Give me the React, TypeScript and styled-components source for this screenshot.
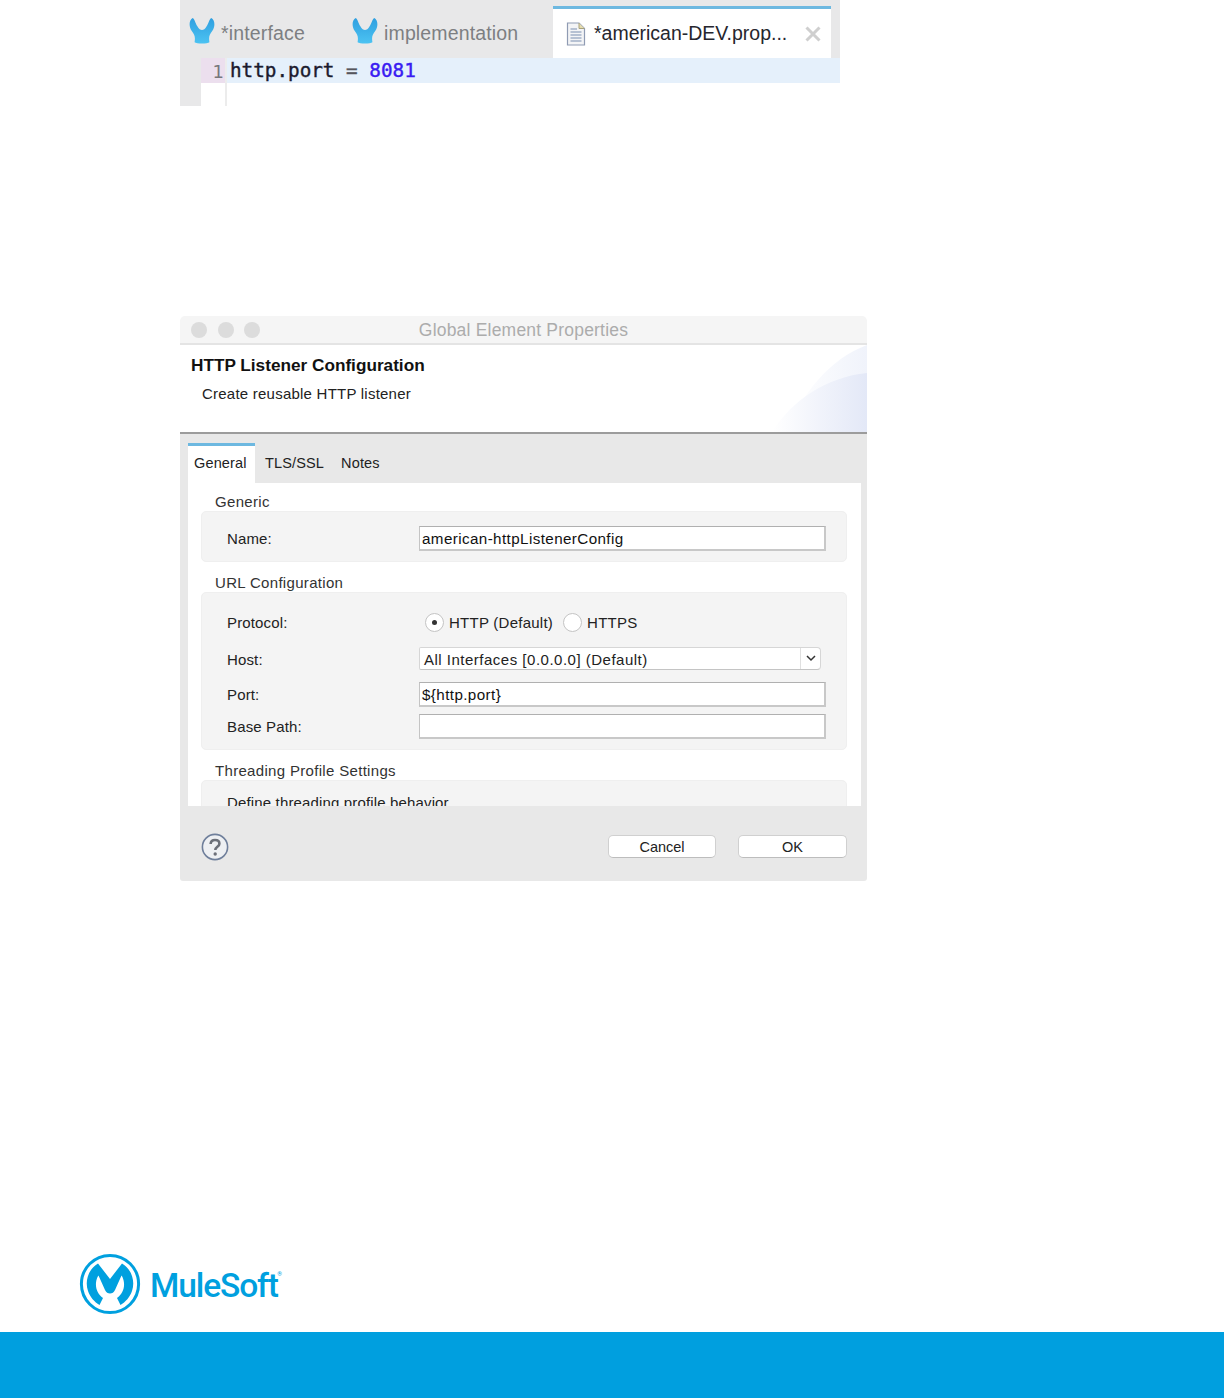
import styled, { createGlobalStyle } from 'styled-components'

const GlobalStyle = createGlobalStyle`
  html, body {
    margin: 0;
    padding: 0;
    background: #fff;
    font-family: "Liberation Sans", Arial, sans-serif;
  }
`

function MuleIcon() {
  return (
    <TabIconSvg width="26" height="28" viewBox="0 0 28 30">
      <defs>
        <linearGradient id="muleGrad" x1="0" y1="0" x2="0" y2="1">
          <stop offset="0" stopColor="#2f9fe0" />
          <stop offset="1" stopColor="#4cc3f2" />
        </linearGradient>
      </defs>
      <path
        d="M4 1C0 3 -0.5 10 3 15C6 19 7 21 6 27C8 29 20 29 22 27C21 21 22 19 25 15C28.500 10 28 3 24 1C22 2 21 7 19 10C17.500 13 15.500 14 14 14C12.500 14 10.500 13 9 10C7 7 6 2 4 1Z"
        fill="url(#muleGrad)"
      />
    </TabIconSvg>
  )
}

function FileIcon() {
  return (
    <svg width="20" height="24" viewBox="0 0 20 24">
      <path d="M1.5 1H13L18.5 6.5V23H1.5Z" fill="#f3f4f6" stroke="#8f9bb3" strokeWidth="1.2" />
      <path d="M13 1V6.5H18.5" fill="#e6dcae" stroke="#a8a27c" strokeWidth="1" />
      <path d="M4.5 7H11M4.5 10H15.5M4.5 13H15.5M4.5 16H15.5M4.5 19H15.5" stroke="#7b8db0" strokeWidth="1.2" />
    </svg>
  )
}

function CloseIcon() {
  return (
    <CloseSvg width="16" height="16" viewBox="0 0 16 16">
      <path d="M1.500 1.500L14.500 14.500M14.500 1.500L1.500 14.500" stroke="#cfcfcf" strokeWidth="3" />
    </CloseSvg>
  )
}

function HeaderSwoosh() {
  return (
    <SwooshSvg width="100" height="87" viewBox="0 0 100 87">
      <defs>
        <linearGradient id="swooshGrad" x1="0" y1="0" x2="1" y2="0">
          <stop offset="0" stopColor="#ffffff" />
          <stop offset="1" stopColor="#e3e8f7" />
        </linearGradient>
        <linearGradient id="swooshLight" x1="0" y1="0" x2="1" y2="0">
          <stop offset="0" stopColor="#ffffff" />
          <stop offset="1" stopColor="#f0f3fb" />
        </linearGradient>
      </defs>
      <path d="M20 87C34 50 62 14 100 0V87Z" fill="url(#swooshLight)" />
      <path d="M5 87C25 55 60 32 100 28V87Z" fill="url(#swooshGrad)" />
    </SwooshSvg>
  )
}

function HelpIcon() {
  return (
    <svg width="28" height="28" viewBox="0 0 28 28">
      <circle cx="14" cy="14" r="12.600" fill="#eef0f3" stroke="#6f7f9b" strokeWidth="1.600" />
      <path
        d="M9.600 11C9.800 8.200 11.600 7 14 7C16.600 7 18.400 8.500 18.400 10.700C18.400 13.800 14.300 13.800 14.300 17"
        fill="none"
        stroke="#6c7079"
        strokeWidth="2.600"
      />
      <circle cx="14.200" cy="21" r="1.700" fill="#6c7079" />
    </svg>
  )
}

function MuleLogo() {
  return (
    <svg width="62" height="62" viewBox="0 0 62 62">
      <circle cx="31" cy="31" r="28.600" fill="none" stroke="#00a0df" strokeWidth="3" />
      <path
        d="M19 10.500C9.500 16 5.500 28 9 38C11 44 15.500 49 20.500 52L24 45C19 41.500 16.500 36 17 30C17.300 27 18 24.500 19.500 22.500L26 37C27 39.500 29 40.500 31 40.500C33 40.500 35 39.500 36 37L42.500 22.500C44 24.500 44.700 27 45 30C45.500 36 43 41.500 38 45L41.500 52C46.500 49 51 44 53 38C56.500 28 52.500 16 43 10.500L31 26Z"
        fill="#00a0df"
      />
    </svg>
  )
}

export default function App() {
  return (
    <>
      <GlobalStyle />
      <Page>
        <Editor>
          <TabBar>
            <EditorTab $width={163}>
              <MuleIcon />
              <TabLabel>*interface</TabLabel>
            </EditorTab>
            <EditorTab $width={201}>
              <MuleIcon />
              <TabLabel>implementation</TabLabel>
            </EditorTab>
            <ActiveEditorTab>
              <FileIcon />
              <ActiveTabLabel>*american-DEV.prop...</ActiveTabLabel>
              <CloseIcon />
            </ActiveEditorTab>
          </TabBar>
          <CodeArea>
            <Margin />
            <Gutter>
              <LineNumber>1</LineNumber>
            </Gutter>
            <CodeLine>
              <span>http.port </span>
              <CodeOperator>=</CodeOperator>
              <CodeNumber> 8081</CodeNumber>
            </CodeLine>
          </CodeArea>
        </Editor>

        <Dialog>
          <TitleBar>
            <TrafficLights>
              <Light />
              <Light />
              <Light />
            </TrafficLights>
            <WindowTitle>Global Element Properties</WindowTitle>
          </TitleBar>

          <Header>
            <HeaderTitle>HTTP Listener Configuration</HeaderTitle>
            <HeaderSub>Create reusable HTTP listener</HeaderSub>
            <HeaderSwoosh />
          </Header>

          <Body>
            <Tabs>
              <ActiveTab>General</ActiveTab>
              <Tab>TLS/SSL</Tab>
              <Tab>Notes</Tab>
            </Tabs>

            <TabContent>
              <GroupLabel>Generic</GroupLabel>
              <Group>
                <FormRow>
                  <FieldLabel>Name:</FieldLabel>
                  <TextField>american-httpListenerConfig</TextField>
                </FormRow>
              </Group>

              <GroupLabel>URL Configuration</GroupLabel>
              <UrlGroup>
                <ProtocolRow>
                  <FieldLabel>Protocol:</FieldLabel>
                  <RadioSet>
                    <Radio $checked />
                    <RadioText>HTTP (Default)</RadioText>
                    <Radio />
                    <RadioText>HTTPS</RadioText>
                  </RadioSet>
                </ProtocolRow>
                <HostRow>
                  <HostLabel>Host:</HostLabel>
                  <SelectBox>
                    <SelectValue>All Interfaces [0.0.0.0] (Default)</SelectValue>
                    <SelectArrow>
                      <svg width="10" height="7" viewBox="0 0 10 7">
                        <path d="M1 1L5 5L9 1" fill="none" stroke="#333" strokeWidth="1.500" />
                      </svg>
                    </SelectArrow>
                  </SelectBox>
                </HostRow>
                <FormRow>
                  <FieldLabel>Port:</FieldLabel>
                  <TextField>{'${http.port}'}</TextField>
                </FormRow>
                <FormRow>
                  <FieldLabel>Base Path:</FieldLabel>
                  <TextField />
                </FormRow>
              </UrlGroup>

              <GroupLabel>Threading Profile Settings</GroupLabel>
              <ClippedGroup>
                <FieldLabel>Define threading profile behavior</FieldLabel>
              </ClippedGroup>
            </TabContent>

            <ButtonBar>
              <HelpIcon />
              <Buttons>
                <DialogButton $width={108}>Cancel</DialogButton>
                <DialogButton $width={109}>OK</DialogButton>
              </Buttons>
            </ButtonBar>
          </Body>
        </Dialog>

        <LogoRow>
          <MuleLogo />
          <LogoText>
            MuleSoft<LogoMark>®</LogoMark>
          </LogoText>
        </LogoRow>

        <FooterBand />
      </Page>
    </>
  )
}

const Page = styled.div`
  width: 1224px;
  height: 1398px;
  display: flex;
  flex-direction: column;
  overflow: hidden;
`

const Editor = styled.div`
  width: 660px;
  height: 106px;
  margin-left: 180px;
  display: flex;
  flex-direction: column;
`

const TabBar = styled.div`
  height: 58px;
  background: #e8e8e9;
  display: flex;
  padding-left: 9px;
`

const EditorTab = styled.div<{ $width: number }>`
  width: ${({ $width }) => $width}px;
  display: flex;
  align-items: center;
  gap: 6px;
  padding-top: 9px;
  box-sizing: border-box;
`

const TabIconSvg = styled.svg`
  flex: none;
  margin-top: -5px;
`

const TabLabel = styled.span`
  font-size: 19.500px;
  letter-spacing: 0.15px;
  color: #7d7f82;
`

const ActiveEditorTab = styled.div`
  width: 278px;
  height: 52px;
  margin-top: 6px;
  box-sizing: border-box;
  background: #fff;
  border-top: 3px solid #6db8e0;
  display: flex;
  align-items: center;
  padding: 0 10px 0 13px;
`

const ActiveTabLabel = styled.span`
  font-size: 19.500px;
  color: #26262e;
  margin-left: 8px;
`

const CloseSvg = styled.svg`
  margin-left: auto;
`

const CodeArea = styled.div`
  flex: 1;
  display: flex;
  align-items: flex-start;
`

const Margin = styled.div`
  width: 21px;
  height: 48px;
  background: #e8e8e9;
`

const Gutter = styled.div`
  width: 24px;
  height: 48px;
  border-right: 2px solid #ececec;
  background: linear-gradient(to bottom, #ecdfee 25px, #fff 25px);
`

const LineNumber = styled.div`
  height: 25px;
  line-height: 28px;
  padding-right: 1px;
  text-align: right;
  font-family: "DejaVu Sans", sans-serif;
  font-size: 18px;
  color: #77777c;
`

const CodeLine = styled.div`
  flex: 1;
  height: 25px;
  padding-left: 3px;
  background: #e5f0fb;
  font-family: "DejaVu Sans Mono", monospace;
  font-size: 19.300px;
  line-height: 25px;
  white-space: pre;
  color: #1b1b2e;
  -webkit-text-stroke: 0.4px currentColor;
`

const CodeOperator = styled.span`
  color: #55555c;
`

const CodeNumber = styled.span`
  color: #3a1cf2;
`

const Dialog = styled.div`
  width: 687px;
  height: 565px;
  margin: 210px 0 0 180px;
  display: flex;
  flex-direction: column;
  border-radius: 5px 5px 3px 3px;
  overflow: hidden;
`

const TitleBar = styled.div`
  height: 29px;
  flex: none;
  box-sizing: border-box;
  padding-top: 2px;
  background: #f5f5f5;
  border-bottom: 2px solid #e4e4e4;
  display: flex;
  align-items: center;
  justify-content: center;
  position: relative;
`

const TrafficLights = styled.div`
  position: absolute;
  left: 11px;
  top: 6px;
  display: flex;
  gap: 10.500px;
`

const Light = styled.span`
  width: 16px;
  height: 16px;
  border-radius: 50%;
  background: #dcdcdc;
`

const WindowTitle = styled.span`
  font-size: 17.500px;
  letter-spacing: 0.2px;
  color: #acacac;
`

const Header = styled.div`
  height: 89px;
  flex: none;
  box-sizing: border-box;
  background: #fff;
  border-bottom: 2px solid #9c9c9c;
  position: relative;
  padding: 9px 0 0 11px;
`

const SwooshSvg = styled.svg`
  position: absolute;
  right: 0;
  top: 0;
`

const HeaderTitle = styled.div`
  font-size: 17.200px;
  font-weight: 700;
  line-height: 22px;
  color: #111;
`

const HeaderSub = styled.div`
  font-size: 15px;
  letter-spacing: 0.23px;
  line-height: 20px;
  margin: 8px 0 0 11px;
  color: #222;
`

const Body = styled.div`
  flex: 1;
  display: flex;
  flex-direction: column;
  background: #e8e8e8;
  min-height: 0;
`

const Tabs = styled.div`
  height: 40px;
  flex: none;
  margin-top: 9px;
  padding-left: 8px;
  display: flex;
  font-size: 14.500px;
  letter-spacing: 0.15px;
  color: #222;
`

const Tab = styled.div`
  display: flex;
  align-items: center;
  padding: 0 7px 0 10px;
`

const ActiveTab = styled(Tab)`
  width: 67px;
  box-sizing: border-box;
  padding: 0 0 3px 6px;
  background: #fff;
  border-top: 3px solid #6db8e0;
`

const TabContent = styled.div`
  height: 323px;
  flex: none;
  margin: 0 6px 0 8px;
  padding-top: 10px;
  box-sizing: border-box;
  background: #fff;
  overflow: hidden;
`

const GroupLabel = styled.div`
  height: 18px;
  line-height: 18px;
  margin: 12px 0 0 27px;
  font-size: 15px;
  letter-spacing: 0.32px;
  color: #333;

  &:first-child {
    margin-top: 0;
  }
`

const Group = styled.div`
  margin: 0 14px 0 13px;
  padding: 14px 20px 10px 25px;
  background: #f4f4f4;
  border: 1px solid #efefef;
  border-radius: 5px;
  box-sizing: border-box;
  display: flex;
  flex-direction: column;
`

const UrlGroup = styled(Group)`
  padding-top: 19px;
  height: 158px;
  gap: 7px;
`

const ClippedGroup = styled(Group)`
  padding-top: 13px;
  height: 60px;
`

const FormRow = styled.div`
  display: grid;
  grid-template-columns: 192px 1fr;
  align-items: center;
`

const ProtocolRow = styled(FormRow)`
  height: 21px;
  margin-bottom: 7px;
`

const HostRow = styled(FormRow)`
  margin-bottom: 5px;
`

const FieldLabel = styled.span`
  font-size: 15px;
  letter-spacing: 0.15px;
  color: #222;
  white-space: nowrap;
`

const HostLabel = styled(FieldLabel)`
  padding-top: 2px;
`

const TextField = styled.div`
  height: 25px;
  box-sizing: border-box;
  padding-left: 2px;
  line-height: 24px;
  background: #fff;
  border-style: solid;
  border-width: 1px 2px 2px 1px;
  border-color: #b0b0b0 #c8c8c8 #c8c8c8 #c4c4c4;
  font-size: 15.200px;
  letter-spacing: 0.4px;
  color: #111;
`

const RadioSet = styled.div`
  display: flex;
  align-items: center;
  padding-left: 6px;
`

const Radio = styled.span<{ $checked?: boolean }>`
  width: 19px;
  height: 19px;
  box-sizing: border-box;
  border-radius: 50%;
  background: #fff;
  border: 1px solid #c4c4c4;
  display: flex;
  align-items: center;
  justify-content: center;

  &::after {
    content: '';
    width: 5px;
    height: 5px;
    border-radius: 50%;
    background: ${({ $checked }) => ($checked ? '#333' : 'transparent')};
  }
`

const RadioText = styled.span`
  font-size: 15px;
  letter-spacing: 0.25px;
  color: #222;
  margin: 0 10px 0 5px;
`

const SelectBox = styled.div`
  width: 402px;
  height: 23px;
  box-sizing: border-box;
  background: #fff;
  border: 1px solid #d6d6d6;
  border-bottom-color: #c4c4c4;
  border-radius: 2px 4px 4px 2px;
  display: flex;
  align-items: center;
`

const SelectValue = styled.span`
  flex: 1;
  padding: 2px 0 0 4px;
  font-size: 15px;
  letter-spacing: 0.5px;
  color: #222;
`

const SelectArrow = styled.span`
  width: 19px;
  height: 100%;
  border-left: 1px solid #e0e0e0;
  display: flex;
  align-items: center;
  justify-content: center;
`

const ButtonBar = styled.div`
  flex: 1;
  display: flex;
  align-items: center;
  justify-content: space-between;
  padding: 6px 20px 0 21px;
`

const Buttons = styled.div`
  display: flex;
  gap: 22px;
`

const DialogButton = styled.div<{ $width: number }>`
  width: ${({ $width }) => $width}px;
  height: 23px;
  box-sizing: border-box;
  background: #fff;
  border: 1px solid #d0d0d0;
  border-bottom-color: #bdbdbd;
  border-radius: 5px;
  font-size: 14.500px;
  line-height: 22px;
  text-align: center;
  color: #222;
`

const LogoRow = styled.div`
  margin: 372px 0 0 79px;
  height: 62px;
  display: flex;
  align-items: center;
  gap: 9px;
  color: #00a0df;
`

const LogoText = styled.div`
  font-family: Roboto, sans-serif;
  font-size: 33.500px;
  font-weight: 500;
  letter-spacing: -1.1px;
  line-height: 62px;
  padding: 3px 4px 0 0;
  position: relative;
`

const LogoMark = styled.span`
  position: absolute;
  right: 0;
  top: 18px;
  font-size: 6px;
  font-weight: 400;
  line-height: 8px;
  letter-spacing: 0;
`

const FooterBand = styled.div`
  margin-top: auto;
  height: 66px;
  flex: none;
  background: #009fdf;
`
